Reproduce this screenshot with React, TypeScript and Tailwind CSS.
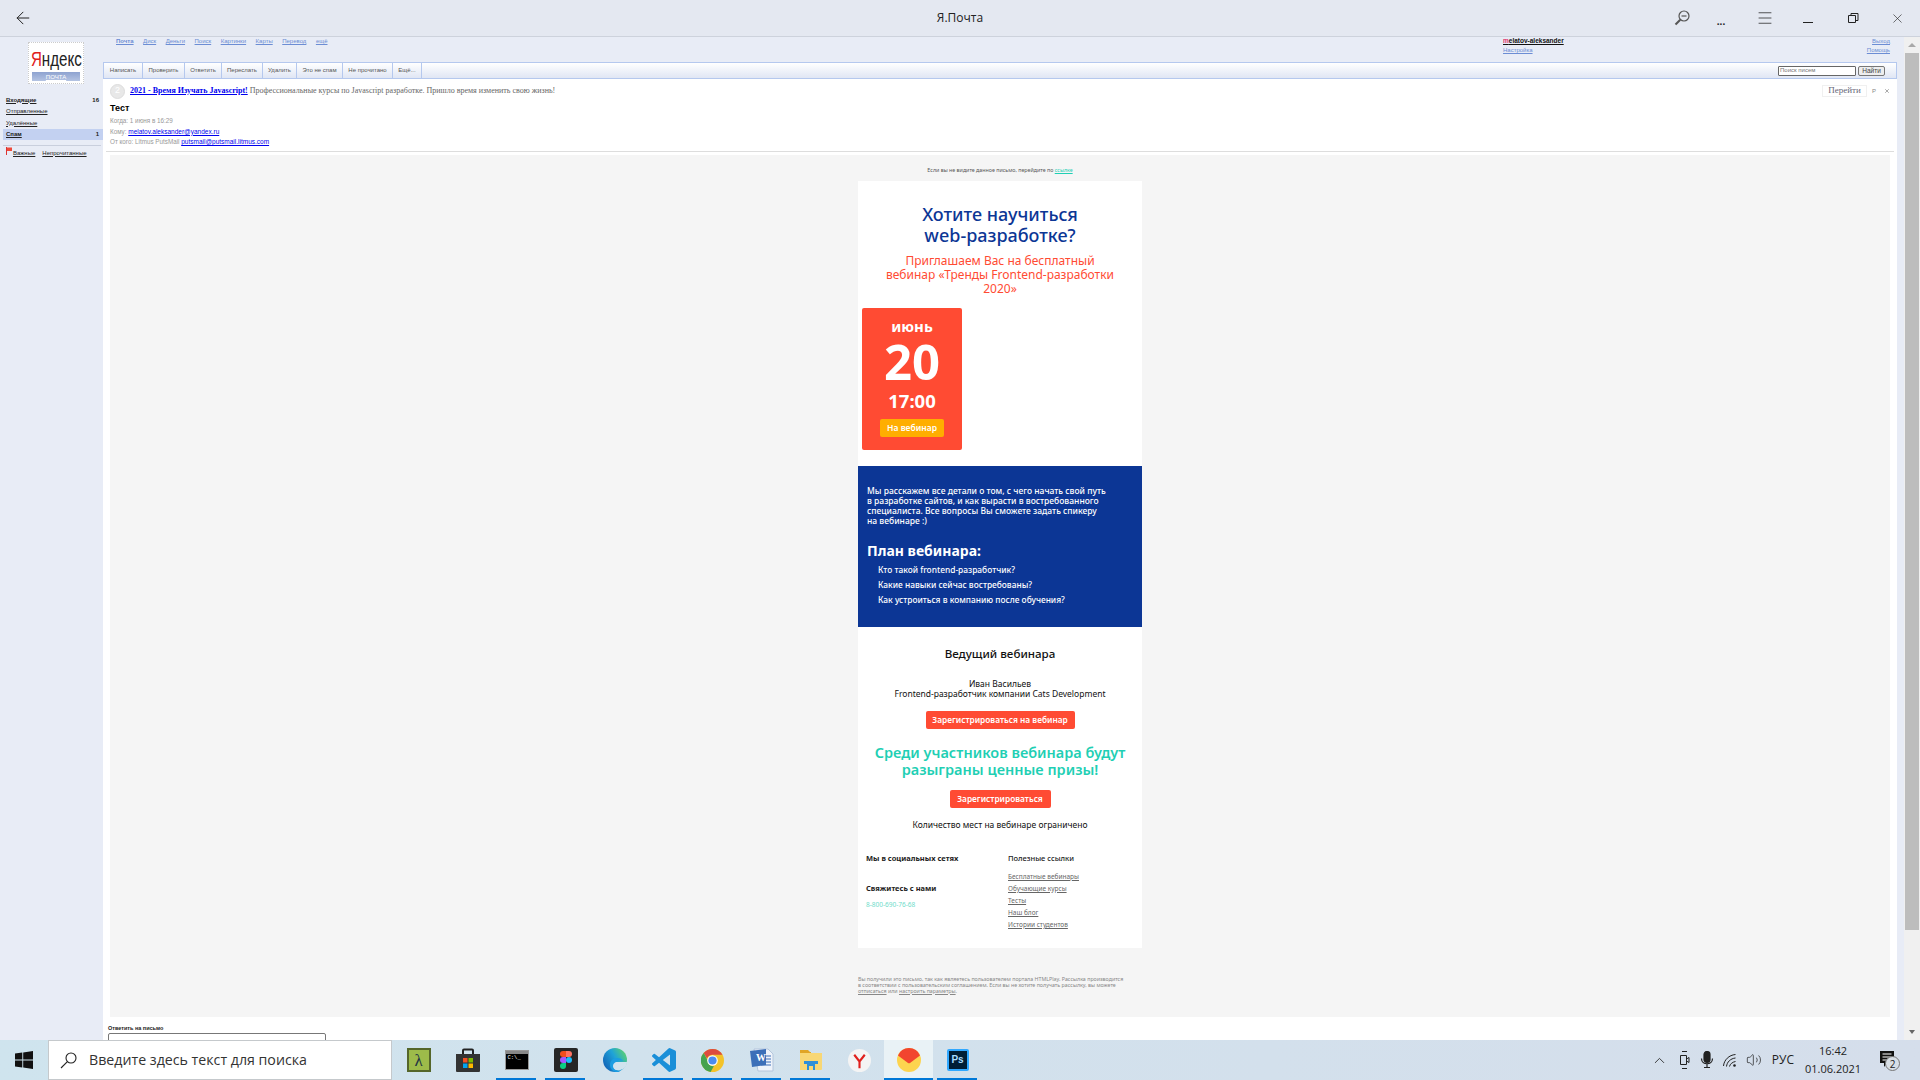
import React from "react";
import { ArrowLeft, ChevronUp, Menu, Volume2, X } from "lucide-react";

const serviceLinks = ["Почта", "Диск", "Деньги", "Поиск", "Картинки", "Карты", "Перевод", "ещё"];

const toolbarButtons = [
  { label: "Написать", width: "w-[39px]" },
  { label: "Проверить", width: "w-[42px]" },
  { label: "Ответить", width: "w-[37px]" },
  { label: "Переслать", width: "w-[41px]" },
  { label: "Удалить", width: "w-[34px]" },
  { label: "Это не спам", width: "w-[46px]" },
  { label: "Не прочитано", width: "w-[50px]" },
  { label: "Ещё...", width: "w-[29px]" },
];

const footerLinks = ["Бесплатные вебинары", "Обучающие курсы", "Тесты", "Наш блог", "Истории студентов"];

const planItems = [
  "Кто такой frontend-разработчик?",
  "Какие навыки сейчас востребованы?",
  "Как устроиться в компанию после обучения?",
];

function FolderLink({ label, count, active, bold }: { label: string; count?: string; active?: boolean; bold?: boolean }) {
  return (
    <div className={`flex h-[11px] items-center justify-between pl-[3px] pr-[4px] ${active ? "bg-[#c3d1f1]" : ""}`}>
      <span className={`text-[6px] leading-[8px] text-[#222] underline ${bold ? "font-bold" : ""}`}>{label}</span>
      {count && <span className="text-[6px] font-bold leading-[8px] text-[#222]">{count}</span>}
    </div>
  );
}

function Sidebar() {
  return (
    <aside className="flex w-[103px] shrink-0 flex-col bg-[#e8ecf6] pt-[5px] font-['Liberation_Sans',sans-serif]">
      <div className="ml-[28px] flex h-[42px] w-[56px] flex-col items-center border border-dotted border-[#ccc] bg-white">
        <div className="mt-[5px] flex h-[22px] items-center text-[21px] leading-[22px] scale-x-[0.72]">
          <span className="text-[#e0201c]">Я</span>
          <span className="text-[#222]">ндекс</span>
        </div>
        <div className="mt-[2px] flex h-[9px] w-[48px] items-center justify-center bg-gradient-to-b from-[#8ea3d0] to-[#b4c3e2] text-[6px] leading-[8px] text-white underline">
          ПОЧТА
        </div>
      </div>
      <div className="mt-[10px] flex flex-col gap-[0.5px] pl-[3px]">
        <FolderLink label="Входящие" count="16" bold />
        <FolderLink label="Отправленные" />
        <FolderLink label="Удалённые" />
        <FolderLink label="Спам" count="1" active bold />
      </div>
      <div className="ml-[3px] mt-[5px] h-px w-[98px] bg-[#c9cfdd]" />
      <div className="mt-[3px] flex items-center pl-[6px] text-[6px] leading-[8px] text-[#222]">
        <svg width="6" height="8" viewBox="0 0 6 8" className="mr-[1px] -mt-[3px]">
          <path d="M0.5 0v8" stroke="#d33" />
          <path d="M1 0.5h5v3.5H1z" fill="#ee4a3a" />
        </svg>
        <span className="underline">Важные</span>
        <span className="ml-[7px] underline">Непрочитанные</span>
      </div>
    </aside>
  );
}

function TopNav() {
  return (
    <div className="flex h-[25px] justify-between bg-[#e8ecf6] pl-[13px] pr-[7px] font-['Liberation_Sans',sans-serif] text-[6px] leading-[8px] text-[#6c8dd4]">
      <div className="flex gap-[9.5px]">
        {serviceLinks.map((link, i) => (
          <span key={link} className={`underline ${i === 0 ? "font-bold" : ""}`}>
            {link}
          </span>
        ))}
      </div>
      <div className="ml-auto flex w-[387px] justify-between">
        <div className="flex flex-col gap-[1px]">
          <span className="text-[6.5px] font-bold text-[#111] underline">
            <span className="text-[#e0306a]">m</span>elatov-aleksander
          </span>
          <span className="underline">Настройка</span>
        </div>
        <div className="flex flex-col items-end gap-[1px]">
          <span className="underline">Выход</span>
          <span className="underline">Помощь</span>
        </div>
      </div>
    </div>
  );
}

function Toolbar() {
  return (
    <div className="flex h-[17px] items-stretch border border-[#b5c8ee] bg-gradient-to-b from-white to-[#e0e6f4] font-['Liberation_Sans',sans-serif] text-[6px] text-[#555]">
      {toolbarButtons.map((b) => (
        <div key={b.label} className={`flex items-center justify-center border-r border-[#b5c8ee] ${b.width}`}>
          {b.label}
        </div>
      ))}
      <div className="ml-auto mr-[11px] flex items-center gap-[2px]">
        <div className="flex h-[10px] w-[78px] items-center rounded-[1px] border border-[#666] bg-white pl-[1px] text-[6px] leading-[7px] text-[#777]">
          Поиск писем
        </div>
        <div className="flex h-[10px] w-[27px] items-center justify-center rounded-[2px] border border-[#777] bg-[#eee] text-[6.5px] leading-[7px] text-[#444]">
          Найти
        </div>
      </div>
    </div>
  );
}

function MessageHeader() {
  return (
    <div className="font-['Liberation_Sans',sans-serif]">
      <div className="flex h-[24px] items-center pl-[7px] pr-[7px]">
        <div className="flex size-[15px] items-center justify-center rounded-full border border-[#ddd] bg-[#e8e8e8] text-[9px] text-white">
          2
        </div>
        <div className="ml-[5px] font-['Liberation_Serif',serif] text-[8px] text-[#666]">
          <a className="font-bold text-[#0000ee] underline">2021 - Время Изучать Javascript!</a>{" "}
          Профессиональные курсы по Javascript разработке. Пришло время изменить свою жизнь!
        </div>
        <div className="ml-auto flex items-center">
          <div className="flex h-[12px] w-[45px] items-center justify-center border border-[#f0f0f0] font-['Liberation_Serif',serif] text-[9px] text-[#667]">
            Перейти
          </div>
          <span className="ml-[5px] text-[6px] leading-none text-[#888]">P</span>
          <X className="ml-[8px] text-[#555]" size={6} strokeWidth={2} />
        </div>
      </div>
      <div className="pl-[7px] text-[9px] font-bold leading-[11px] text-black">Тест</div>
      <div className="mt-[2px] pl-[7px] text-[6.3px] leading-[10.5px] text-[#999]">
        <div>Когда: 1 июня в 16:29</div>
        <div>
          Кому: <a className="text-[6.5px] text-[#0000ee] underline">melatov.aleksander@yandex.ru</a>
        </div>
        <div>
          От кого: Litmus PutsMail <a className="text-[6.5px] text-[#0000ee] underline">putsmail@putsmail.litmus.com</a>
        </div>
      </div>
      <div className="mx-[3px] mt-[3px] h-px bg-[#ddd]" />
    </div>
  );
}

function RedButton({ label, width }: { label: string; width: string }) {
  return (
    <div className={`mx-auto flex h-[18px] items-center justify-center rounded-[2px] bg-[#ff4b33] text-[8.3px] font-semibold leading-[10px] text-white ${width}`}>
      {label}
    </div>
  );
}

function EmailColumn() {
  return (
    <div className="ml-[748px] w-[284px] pt-[10px] font-['Noto_Sans',sans-serif]">
      <div className="h-[16px] text-center text-[5.3px] leading-[10px] text-[#555]">
        Если вы не видите данное письмо, перейдите по <a className="text-[#1fcfb4] underline">ссылке</a>
      </div>
      <div className="bg-white pb-[16px] pt-[23px]">
        <h1 className="text-center text-[18px] font-medium leading-[21px] text-[#0c3695]">
          Хотите научиться
          <br />
          web-разработке?
        </h1>
        <p className="mt-[8px] text-center text-[12px] leading-[14px] text-[#ff4b33]">
          Приглашаем Вас на бесплатный
          <br />
          вебинар «Тренды Frontend-разработки
          <br />
          2020»
        </p>
        <div className="ml-[4px] mt-[12px] flex h-[142px] w-[100px] flex-col items-center rounded-[2px] bg-[#ff4b33] pt-[8px] font-bold text-white">
          <div className="text-[15px] leading-[20px]">июнь</div>
          <div className="text-[49px] leading-[50px]">20</div>
          <div className="mt-[3px] text-[18.5px] leading-[24px]">17:00</div>
          <div className="mt-[6px] flex h-[18px] w-[64px] items-center justify-center rounded-[2px] bg-[#ffae00] text-[8.5px] font-semibold leading-[10px]">
            На вебинар
          </div>
        </div>
      </div>
      <div className="h-[161px] bg-[#0c3695] pl-[9px] pt-[20px] text-white">
        <p className="text-[8.5px] font-medium leading-[10px]">
          Мы расскажем все детали о том, с чего начать свой путь
          <br />в разработке сайтов, и как вырасти в востребованного
          <br />
          специалиста. Все вопросы Вы сможете задать спикеру
          <br />
          на вебинаре :)
        </p>
        <h2 className="mt-[15px] text-[14px] font-bold leading-[20px]">План вебинара:</h2>
        <ul className="ml-[11px] mt-[3.5px] flex flex-col gap-[3px] text-[8.4px] font-medium leading-[12px]">
          {planItems.map((item) => (
            <li key={item}>{item}</li>
          ))}
        </ul>
      </div>
      <div className="bg-white pb-[18px] pt-[19px] text-center text-[#111]">
        <h3 className="text-[11.6px] font-medium leading-[16px]">Ведущий вебинара</h3>
        <p className="mt-[17px] text-[8.5px] leading-[10px]">
          Иван Васильев
          <br />
          Frontend-разработчик компании Cats Development
        </p>
        <div className="mt-[12px]">
          <RedButton label="Зарегистрироваться на вебинар" width="w-[149px]" />
        </div>
        <h3 className="mt-[15px] text-[14.5px] font-semibold leading-[17px] text-[#1fcfb4]">
          Среди участников вебинара будут
          <br />
          разыграны ценные призы!
        </h3>
        <div className="mt-[12px]">
          <RedButton label="Зарегистрироваться" width="w-[101px]" />
        </div>
        <p className="mt-[11px] text-[8.5px] leading-[12px]">Количество мест на вебинаре ограничено</p>
        <div className="mt-[22px] flex pl-[8px] text-left">
          <div className="w-[142px]">
            <div className="text-[7.5px] font-bold leading-[10px] text-[#222]">Мы в социальных сетях</div>
            <div className="mt-[20px] text-[7.5px] font-bold leading-[10px] text-[#222]">Свяжитесь с нами</div>
            <div className="mt-[7px] text-[6.5px] leading-[10px] text-[#6fdcca]">8-800-690-76-68</div>
          </div>
          <div>
            <div className="text-[7.5px] font-medium leading-[10px] text-[#222]">Полезные ссылки</div>
            <div className="mt-[9px] flex flex-col gap-[2px] text-[6.5px] leading-[10px] text-[#666]">
              {footerLinks.map((link) => (
                <a key={link} className="underline">
                  {link}
                </a>
              ))}
            </div>
          </div>
        </div>
      </div>
      <p className="mt-[28px] whitespace-nowrap text-[5.3px] leading-[6px] text-[#888]">
        Вы получили это письмо, так как являетесь пользователем портала HTMLPlay. Рассылка производится
        <br />в соответствии с пользовательским соглашением. Если вы не хотите получать рассылку, вы можете
        <br />
        <a className="underline">отписаться</a> или <a className="underline">настроить параметры</a>.
      </p>
    </div>
  );
}

function TitleBar() {
  return (
    <header className="relative flex h-[37px] shrink-0 items-center border-b border-[#cdd2dc] bg-[#e4e8f1] text-[#222]">
      <ArrowLeft className="ml-[13px]" size={20} strokeWidth={1.2} />
      <div className="absolute left-0 right-0 text-center font-['Open_Sans',sans-serif] text-[12px]">Я.Почта</div>
      <div className="ml-auto flex items-center pr-[1px]">
        <svg width="16" height="16" viewBox="0 0 16 16" fill="none" stroke="#555" strokeWidth="1.2">
          <circle cx="10" cy="6" r="5" />
          <path d="M7.500 6h5" />
          <path d="M6.300 9.700 1.500 14.500" strokeWidth="2" />
        </svg>
        <div className="ml-[22px] w-[18px] pt-[6px] text-center text-[10px] font-bold leading-[10px]">...</div>
        <Menu className="ml-[26px]" size={18} strokeWidth={1} />
        <svg width="12" height="12" viewBox="0 0 12 12" className="ml-[28px]" fill="none" stroke="#222">
          <path d="M1 10.500h10" />
        </svg>
        <svg width="12" height="12" viewBox="0 0 12 12" className="ml-[33px]" fill="none" stroke="#222">
          <path d="M1.500 3.500h7v7h-7zM4 3.500V1.500h7v7H8.500" />
        </svg>
        <X className="ml-[31px] mr-[14px]" size={15} strokeWidth={1} />
      </div>
    </header>
  );
}

function Scrollbar() {
  return (
    <div className="flex w-[16px] shrink-0 flex-col items-center bg-[#f0f0f0] pr-[1px]">
      <div className="flex h-[16px] w-full items-center justify-center">
        <div className="h-0 w-0 border-x-[4px] border-b-[4px] border-x-transparent border-b-[#a8a8a8]" />
      </div>
      <div className="h-[877px] w-[14px] bg-[#bdbdbd]" />
      <div className="mt-auto flex h-[16px] w-full items-center justify-center">
        <div className="h-0 w-0 border-x-[3px] border-t-[4px] border-x-transparent border-t-[#666]" />
      </div>
    </div>
  );
}

function TaskIcon({ children, running, active }: { children: React.ReactNode; running?: boolean; active?: boolean }) {
  return (
    <div className={`relative flex h-[40px] w-[49px] items-center justify-center ${active ? "bg-[#e9f2f6]" : ""}`}>
      {children}
      {running && (
        <div className={`absolute bottom-0 h-[2px] bg-[#0078d7] ${active ? "left-0 right-0" : "left-[4px] right-[5px]"}`} />
      )}
    </div>
  );
}

function Taskbar() {
  return (
    <footer className="flex h-[40px] shrink-0 items-center bg-gradient-to-r from-[#cfe4ee] to-[#d5deeb]">
      <div className="flex w-[48px] justify-center">
        <svg width="18" height="18" viewBox="0 0 18 18" fill="#111">
          <path d="M0 2.600 7.300 1.600v7H0zM8.200 1.500 18 0v8.600H8.200zM0 9.400h7.300v7L0 15.400zM8.200 9.400H18V18l-9.800-1.400z" />
        </svg>
      </div>
      <div className="flex h-[40px] w-[344px] items-center border border-[#c5c9cc] bg-white pl-[11px] font-['Open_Sans',sans-serif] text-[14.2px] text-[#333]">
        <svg width="17" height="17" viewBox="0 0 17 17" fill="none" stroke="#222" strokeWidth="1.100">
          <circle cx="11" cy="6" r="5" />
          <path d="M7.400 9.600 1 16" />
        </svg>
        <span className="ml-[12px]">Введите здесь текст для поиска</span>
      </div>
      <div className="ml-[2px] flex">
        <TaskIcon>
          <div className="flex size-[24px] items-center justify-center border-2 border-[#55662a] bg-[#9dbb4a] font-['Liberation_Serif',serif] text-[17px] leading-none text-[#234]">
            λ
          </div>
        </TaskIcon>
        <TaskIcon>
          <svg width="24" height="24" viewBox="0 0 24 24">
            <path d="M7 7V2.500a1 1 0 0 1 1-1h8a1 1 0 0 1 1 1V7" fill="none" stroke="#222" strokeWidth="2" />
            <path d="M0 6h24v17a1 1 0 0 1-1 1H1a1 1 0 0 1-1-1z" fill="#333" />
            <path d="M7 10h4.500v4.500H7z" fill="#f25022" />
            <path d="M12.500 10H17v4.500h-4.500z" fill="#7fba00" />
            <path d="M7 15.500h4.500V20H7z" fill="#00a4ef" />
            <path d="M12.500 15.500H17V20h-4.500z" fill="#ffb900" />
          </svg>
        </TaskIcon>
        <TaskIcon running>
          <div className="h-[20px] w-[24px] border border-[#999] bg-black bg-gradient-to-b from-[#888] from-[14%] to-black to-[14%] pl-[2px] pt-[4px] font-['Liberation_Mono',monospace] text-[5.5px] leading-[6px] text-white">
            C:\_
          </div>
        </TaskIcon>
        <TaskIcon running>
          <div className="flex size-[24px] items-center justify-center rounded-[2px] bg-[#262626]">
            <svg width="12" height="20" viewBox="0 0 12 18">
              <path d="M6 0H3a3 3 0 0 0 0 6h3z" fill="#f24e1e" />
              <path d="M6 0h3a3 3 0 0 1 0 6H6z" fill="#ff7262" />
              <path d="M6 6H3a3 3 0 0 0 0 6h3z" fill="#a259ff" />
              <circle cx="9" cy="9" r="3" fill="#1abcfe" />
              <path d="M6 12H3a3 3 0 1 0 3 3z" fill="#0acf83" />
            </svg>
          </div>
        </TaskIcon>
        <TaskIcon>
          <svg width="24" height="24" viewBox="0 0 24 24">
            <defs>
              <linearGradient id="edgeFill" x1="0" y1="0.8" x2="1" y2="0.2">
                <stop offset="0" stopColor="#0f5fb5" />
                <stop offset="0.55" stopColor="#1fa3d8" />
                <stop offset="1" stopColor="#5fd36a" />
              </linearGradient>
            </defs>
            <circle cx="12" cy="12" r="12" fill="url(#edgeFill)" />
            <path d="M24 14H13c-3 0-5 2-4 5 1 2.500 4 3.500 7 3.500l5-2c2-2 3-4 3-6.500z" fill="#d0e3ee" />
            <path d="M13 14c2-2 5-2 7-1-1-2-3-3-6-3-4 0-7 3-7 7 0 3 2 6 6 7 2 0 3 0 4-1-4 0-7-2-7-5 0-2 1-3 3-4z" fill="#1b9de2" />
          </svg>
        </TaskIcon>
        <TaskIcon running>
          <svg width="24" height="24" viewBox="0 0 24 24">
            <path
              d="M23.150 2.587 18.210.21a1.494 1.494 0 0 0-1.705.29l-9.460 8.630-4.120-3.128a.999.999 0 0 0-1.276.057L.327 7.261A1 1 0 0 0 .326 8.740L3.899 12 .326 15.260a1 1 0 0 0 .001 1.479L1.650 17.940a.999.999 0 0 0 1.276.057l4.120-3.128 9.460 8.630a1.492 1.492 0 0 0 1.704.29l4.942-2.377A1.500 1.500 0 0 0 24 20.060V3.939a1.500 1.500 0 0 0-.850-1.352zm-5.146 14.861L10.826 12l7.178-5.448v10.896z"
              fill="#1a8fd8"
            />
          </svg>
        </TaskIcon>
        <TaskIcon running>
          <svg width="23" height="23" viewBox="0 0 24 24">
            <circle cx="12" cy="12" r="12" fill="#f3c32b" />
            <path d="M12 0a12 12 0 0 1 10.400 6H12a6 6 0 0 0-5.700 4L2.800 4.300A12 12 0 0 1 12 0z" fill="#dd4b3e" />
            <path d="M2.800 4.300 7 12a5.500 5.500 0 0 0 6.500 5.800L10 24A12 12 0 0 1 2.800 4.300z" fill="#45a24f" />
            <circle cx="12" cy="12" r="5.500" fill="#fff" />
            <circle cx="12" cy="12" r="4.300" fill="#4c8bf0" />
          </svg>
        </TaskIcon>
        <TaskIcon running>
          <svg width="24" height="24" viewBox="0 0 24 24">
            <path d="M4 1h14l5 5v17H8z" fill="#eef3fa" stroke="#b4c5dc" />
            <path d="M0 3 16 1v16L2 19z" fill="#3c6fb8" />
            <text x="6" y="13" fontFamily="Liberation Serif" fontSize="10" fontWeight="700" fill="#fff">
              W
            </text>
            <path d="M15 8h6M15 11h6M15 14h6M11 17h10" stroke="#3c6fb8" strokeWidth="1.200" />
          </svg>
        </TaskIcon>
        <TaskIcon running>
          <svg width="22" height="20" viewBox="0 0 22 20">
            <path d="M0 0h8l2 2h1v3H0z" fill="#e0a526" />
            <path d="M0 3h22v16a1 1 0 0 1-1 1H0z" fill="#f8d775" />
            <path d="M4 11h14v3h-3v6h-8v-6H4z" fill="#2f8fd8" />
            <path d="M9 16h4v4H9z" fill="#f8d775" />
          </svg>
        </TaskIcon>
        <TaskIcon>
          <svg width="23" height="23" viewBox="0 0 24 24">
            <circle cx="12" cy="12" r="12" fill="#f4f4f4" />
            <path d="M6.500 6 12 13l5.500-7M12 13v7" fill="none" stroke="#e0201c" strokeWidth="2.200" />
          </svg>
        </TaskIcon>
        <TaskIcon running active>
          <svg width="24" height="24" viewBox="0 0 24 24">
            <circle cx="12" cy="12" r="12" fill="#fdd44f" />
            <path d="M12 0a12 12 0 0 1 11 7.500L13 15a1.800 1.800 0 0 1-2 0L1 7.500A12 12 0 0 1 12 0z" fill="#f2452f" />
          </svg>
        </TaskIcon>
        <TaskIcon running>
          <div className="flex size-[22px] items-center justify-center rounded-[2px] border-2 border-[#31a8ff] bg-[#001e36] font-['Liberation_Sans',sans-serif] text-[10px] font-bold leading-none text-[#a9dcff]">
            Ps
          </div>
        </TaskIcon>
      </div>
      <div className="ml-auto flex items-center pr-[23px] text-[#222]">
        <ChevronUp size={17} strokeWidth={1.2} />
        <svg width="11" height="20" viewBox="0 0 11 20" className="ml-[11px]" fill="none" stroke="#222">
          <path d="M3 1.500h5M3 18.500h5M1.500 5.500h6v9h-6zM7.500 9l2.500-1.500v5L7.500 11" />
        </svg>
        <svg width="14" height="18" viewBox="0 0 14 18" className="ml-[10px]" fill="none" stroke="#222" strokeWidth="1.200">
          <rect x="4" y="0.500" width="6" height="11" rx="3" fill="#222" />
          <path d="M1.500 7.500c0 7 11 7 11 0M7 12.500V16M4 16.500h6" />
        </svg>
        <svg width="15" height="15" viewBox="0 0 15 15" className="ml-[9px]" fill="none" stroke="#222" strokeWidth="1">
          <path d="M0.500 13C1 7 6 2 12.500 1.500M3.500 13.500C4 9 7.500 5.500 12.500 5M6.500 13.500C7 11 9.500 9 12.500 8.500" />
          <circle cx="11.500" cy="12.500" r="1.300" fill="#222" stroke="none" />
        </svg>
        <Volume2 className="ml-[8px]" size={16} strokeWidth={1.1} />
        <span className="ml-[10px] font-['Open_Sans',sans-serif] text-[12px]">РУС</span>
        <div className="ml-[9px] w-[60px] text-center font-['Open_Sans',sans-serif] text-[11px] leading-[18px]">
          <div>16:42</div>
          <div>01.06.2021</div>
        </div>
        <div className="relative ml-[17px] h-[18px] w-[17px]">
          <svg width="14" height="16" viewBox="0 0 14 16" fill="#111">
            <path d="M0 0h14v12H7l-3 4v-4H0z" />
            <path d="M2.500 3h9M2.500 6h9M2.500 9h9" stroke="#fff" />
          </svg>
          <div className="absolute left-[5px] top-[5px] flex size-[15px] items-center justify-center rounded-full border border-[#777] bg-[#d8dfe6] font-['Open_Sans',sans-serif] text-[10px] leading-none">
            2
          </div>
        </div>
      </div>
    </footer>
  );
}

export default function App() {
  return (
    <div className="flex h-screen w-screen flex-col overflow-hidden">
      <TitleBar />
      <div className="flex min-h-0 flex-1">
        <Sidebar />
        <main className="flex w-[1794px] shrink-0 flex-col">
          <TopNav />
          <Toolbar />
          <div className="min-h-0 flex-1 overflow-hidden bg-white">
            <MessageHeader />
            <div className="mx-[7px] mt-[3px] h-[862px] bg-[#f5f5f5]">
              <EmailColumn />
            </div>
            <div className="ml-[5px] mt-[8px] font-['Liberation_Sans',sans-serif] text-[5.5px] font-bold leading-[6px] text-[#222]">
              Ответить на письмо
            </div>
            <div className="ml-[5px] mt-[2px] h-[30px] w-[218px] rounded-[2px] border border-[#777] bg-white" />
          </div>
        </main>
        <div className="w-[7px] shrink-0 bg-[#e8ecf6]" />
        <Scrollbar />
      </div>
      <Taskbar />
    </div>
  );
}
